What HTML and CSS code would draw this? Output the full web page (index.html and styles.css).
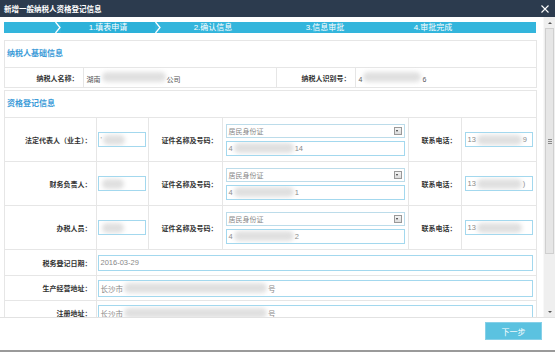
FILE: index.html
```html
<!DOCTYPE html>
<html lang="zh">
<head>
    <meta charset="UTF-8">
    <title>新增一般纳税人资格登记信息</title>
    <link rel="stylesheet" href="styles.css">
</head>
<body>
    <div class="dialog">
        <div class="titlebar">
            <span class="title">新增一般纳税人资格登记信息</span>
            <svg class="close" width="8" height="8" viewBox="0 0 8 8">
                <path d="M0.5 0.5 L7.5 7.5 M7.5 0.5 L0.5 7.5" stroke="#fff" stroke-width="1.1" fill="none"/>
            </svg>
        </div>

        <div class="main">
            <div class="content">
                <!-- 步骤条 -->
                <div class="steps">
                    <div class="step-lead"></div>
                    <svg class="chev" width="6" height="11" viewBox="0 0 6 11"><polyline points="0.5,0 5,5.5 0.5,11" stroke="#fff" stroke-width="1.3" fill="none"/></svg>
                    <div class="step step1">1.填表申请</div>
                    <svg class="chev" width="6" height="11" viewBox="0 0 6 11"><polyline points="0.5,0 5,5.5 0.5,11" stroke="#fff" stroke-width="1.3" fill="none"/></svg>
                    <div class="step step2">2.确认信息</div>
                    <div class="step step3">3.信息审批</div>
                    <div class="step step4">4.审批完成</div>
                    <div class="step-rest"></div>
                </div>

                <!-- 纳税人基础信息 -->
                <div class="panel">
                    <div class="panel-title">纳税人基础信息</div>
                    <table class="grid base">
                        <colgroup>
                            <col class="c78"><col class="c193"><col class="c79"><col class="c181">
                        </colgroup>
                        <tr>
                            <td class="label">纳税人名称：</td>
                            <td class="value">湖南<span class="blur b64"></span>公司</td>
                            <td class="label">纳税人识别号：</td>
                            <td class="value">4<span class="blur b58"></span>6</td>
                        </tr>
                    </table>
                </div>

                <!-- 资格登记信息 -->
                <div class="panel panel-reg">
                    <div class="panel-title">资格登记信息</div>
                    <table class="grid reg">
                        <colgroup>
                            <col class="c91"><col class="c52"><col class="c74"><col class="c186"><col class="c53"><col class="c75">
                        </colgroup>
                        <tr class="row-person">
                            <td class="label">法定代表人（业主）：</td>
                            <td class="cell-name"><div class="field">'<span class="blur b22"></span></div></td>
                            <td class="label">证件名称及号码：</td>
                            <td class="cell">
                                <div class="select"><span>居民身份证</span><span class="drop"></span></div>
                                <div class="field">4<span class="blur b60"></span>14</div>
                            </td>
                            <td class="label">联系电话：</td>
                            <td class="cell"><div class="field">13<span class="blur b45"></span>9</div></td>
                        </tr>
                        <tr class="row-person">
                            <td class="label">财务负责人：</td>
                            <td class="cell-name"><div class="field"><span class="blur b22"></span></div></td>
                            <td class="label">证件名称及号码：</td>
                            <td class="cell">
                                <div class="select"><span>居民身份证</span><span class="drop"></span></div>
                                <div class="field">4<span class="blur b60"></span>1</div>
                            </td>
                            <td class="label">联系电话：</td>
                            <td class="cell"><div class="field">13<span class="blur b45"></span>)</div></td>
                        </tr>
                        <tr class="row-person">
                            <td class="label">办税人员：</td>
                            <td class="cell-name"><div class="field"><span class="blur b22"></span></div></td>
                            <td class="label">证件名称及号码：</td>
                            <td class="cell">
                                <div class="select"><span>居民身份证</span><span class="drop"></span></div>
                                <div class="field">4<span class="blur b60"></span>2</div>
                            </td>
                            <td class="label">联系电话：</td>
                            <td class="cell"><div class="field">13<span class="blur b45"></span></div></td>
                        </tr>
                        <tr class="row-date">
                            <td class="label">税务登记日期：</td>
                            <td class="cell-wide" colspan="5"><div class="field">2016-03-29</div></td>
                        </tr>
                        <tr class="row-addr">
                            <td class="label">生产经营地址：</td>
                            <td class="cell-wide" colspan="5"><div class="field tall">长沙市<span class="blur b143"></span>号</div></td>
                        </tr>
                        <tr class="row-addr">
                            <td class="label">注册地址：</td>
                            <td class="cell-wide" colspan="5"><div class="field tall">长沙市<span class="blur b143"></span>号</div></td>
                        </tr>
                    </table>
                </div>
            </div>

            <!-- 滚动条 -->
            <div class="scrollbar">
                <div class="sb-btn"><span class="arrow-up"></span></div>
                <div class="sb-thumb">
                    <svg width="4" height="5" viewBox="0 0 4 5"><path d="M0 0.5 H4 M0 2.5 H4 M0 4.5 H4" stroke="#888" stroke-width="1"/></svg>
                </div>
                <div class="sb-track"></div>
                <div class="sb-btn"><span class="arrow-down"></span></div>
            </div>
        </div>

        <div class="footer">
            <button class="btn-next">下一步</button>
        </div>
    </div>
</body>
</html>
```

FILE: styles.css
```css
body {
    margin: 0;
    padding: 0;
    font-family: "Liberation Sans", "Noto Sans CJK SC", sans-serif;
    background-color: #fff;
    color: #333;
}

.dialog {
    width: 555px;
    height: 352px;
    box-sizing: border-box;
    display: flex;
    flex-direction: column;
    border-bottom: 2px solid #9a9a9a;
    background-color: #fff;
}

.titlebar {
    height: 17px;
    flex: none;
    display: flex;
    align-items: center;
    justify-content: space-between;
    padding: 0 6px 0 4px;
    background-color: #2c3b4e;
}

.title {
    color: #fff;
    font-size: 7.5px;
    font-weight: bold;
}

.close {
    display: block;
}

.main {
    height: 300px;
    flex: none;
    display: flex;
}

.content {
    flex: 1;
    overflow: hidden;
    padding: 5px 6px 0 4px;
}

/* 步骤条 */
.steps {
    display: flex;
    height: 11px;
    margin-right: 1px;
    background-color: #33b5dc;
    color: #fff;
    font-size: 8px;
    line-height: 11px;
}

.step-lead {
    width: 51px;
}

.chev {
    flex: none;
    display: block;
}

.step {
    text-align: center;
    white-space: nowrap;
}

.step1 {
    width: 94px;
    background-color: #2cb1d9;
}

.step2 {
    width: 104px;
}

.step3 {
    width: 120px;
}

.step4 {
    width: 96px;
}

.step-rest {
    flex: 1;
}

/* 面板 */
.panel {
    margin-top: 7px;
    border: 1px solid #e6e6e6;
}

.panel-reg {
    margin-top: 2px;
}

.panel-title {
    height: 26px;
    line-height: 26px;
    padding-left: 2px;
    border-bottom: 1px solid #e6e6e6;
    color: #3d9cd8;
    font-size: 8px;
    font-weight: bold;
}

.grid {
    width: 531px;
    table-layout: fixed;
    border-collapse: collapse;
    border-style: hidden;
    font-size: 7px;
}

.grid td {
    border: 1px solid #e6e6e6;
    padding: 0;
    vertical-align: middle;
}

.c78 { width: 78px; }
.c193 { width: 193px; }
.c79 { width: 79px; }
.c181 { width: 181px; }
.c91 { width: 91px; }
.c52 { width: 52px; }
.c74 { width: 74px; }
.c186 { width: 186px; }
.c53 { width: 53px; }
.c75 { width: 75px; }

.base td {
    height: 19px;
}

.label {
    text-align: right;
    padding-right: 4px !important;
    font-weight: bold;
    color: #333;
    white-space: nowrap;
}

.value {
    padding-left: 3px !important;
    color: #555;
}

.row-person td {
    height: 43px;
}

.row-date td {
    height: 25px;
}

.row-addr td {
    height: 24px;
}

.cell {
    padding: 0 3px !important;
}

.cell-name {
    padding: 0 2px 0 1px !important;
}

.cell-wide {
    padding: 0 3px 0 1px !important;
}

.field {
    height: 15px;
    box-sizing: border-box;
    border: 1px solid #a3d8ee;
    background-color: #fff;
    padding-left: 2px;
    display: flex;
    align-items: center;
    color: #888;
    font-size: 7.5px;
    white-space: nowrap;
    overflow: hidden;
}

.field.tall {
    height: 17px;
}

.row-date .field {
    height: 16px;
}

.select {
    height: 14px;
    box-sizing: border-box;
    border: 1px solid #bcdcea;
    margin-bottom: 3px;
    padding: 0 2px 0 2px;
    display: flex;
    align-items: center;
    justify-content: space-between;
    color: #888;
    font-size: 7px;
}

.drop {
    width: 8px;
    height: 8px;
    box-sizing: border-box;
    border: 1px solid #999;
    background: linear-gradient(#f4f4f4, #dcdcdc);
    position: relative;
}

.drop::after {
    content: "";
    position: absolute;
    left: 1.5px;
    top: 2.5px;
    border-left: 1.5px solid transparent;
    border-right: 1.5px solid transparent;
    border-top: 2px solid #333;
}

/* 打码 */
.blur {
    display: inline-block;
    height: 10px;
    background-color: #e0e0e0;
    border-radius: 5px;
    filter: blur(2px);
    margin: 0 1px;
}

.b22 { width: 22px; }
.b45 { width: 45px; }
.b58 { width: 58px; }
.b60 { width: 60px; }
.b64 { width: 64px; }
.b143 { width: 143px; }

/* 滚动条 */
.scrollbar {
    width: 12px;
    flex: none;
    display: flex;
    flex-direction: column;
    background-color: #efefef;
    border-left: 1px solid #f8f8f8;
    box-sizing: border-box;
}

.sb-btn {
    height: 11px;
    display: flex;
    align-items: center;
    justify-content: center;
}

.arrow-up {
    border-left: 2px solid transparent;
    border-right: 2px solid transparent;
    border-bottom: 2px solid #555;
}

.arrow-down {
    border-left: 2px solid transparent;
    border-right: 2px solid transparent;
    border-top: 2px solid #555;
}

.sb-thumb {
    height: 224px;
    margin: 0 1px;
    border: 1px solid #cfcfcf;
    background-color: #e6e6e6;
    display: flex;
    align-items: center;
    justify-content: center;
}

.sb-thumb svg {
    display: block;
}

.sb-track {
    flex: 1;
}

/* 底部 */
.footer {
    height: 33px;
    flex: none;
    border-top: 1px solid #e2e2e2;
    display: flex;
    justify-content: flex-end;
    align-items: flex-start;
    padding: 4px 13px 0 0;
    box-sizing: border-box;
}

.btn-next {
    width: 57px;
    height: 18px;
    padding: 0;
    border: 1px solid #86d0e8;
    background-color: #5bc2e0;
    color: #fff;
    font-family: "Liberation Sans", "Noto Sans CJK SC", sans-serif;
    font-size: 8px;
    cursor: pointer;
}
```
